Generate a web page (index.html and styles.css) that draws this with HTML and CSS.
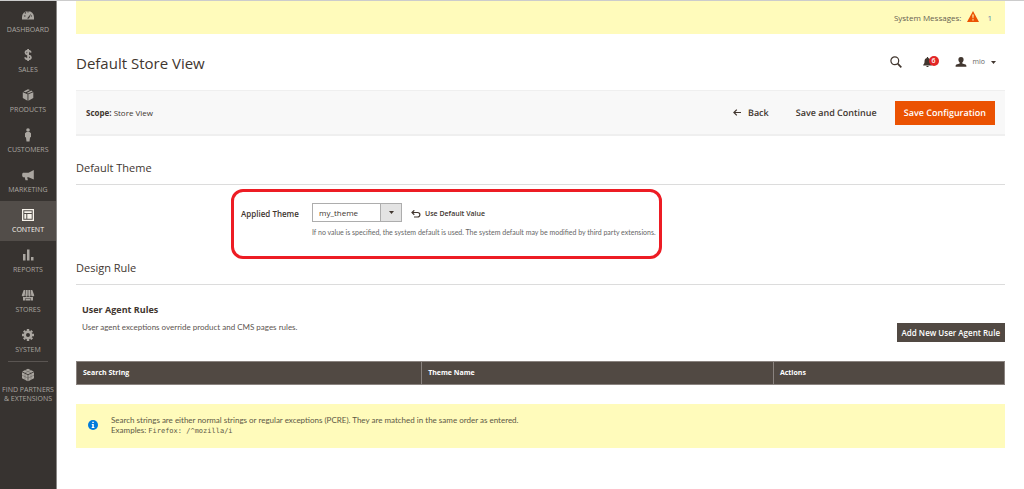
FILE: index.html
```html
<!DOCTYPE html>
<html lang="en">
<head>
<meta charset="utf-8">
<title>Default Store View</title>
<link rel="stylesheet" href="styles.css">
</head>
<body>
<div class="page">
  <nav class="menu" aria-label="Main menu">
    <a class="menu-item" href="#"><svg class="menu-icon" viewBox="0 0 14 14"><path fill="currentColor" fill-rule="evenodd" d="M1 11.500V9a6 6 0 0 1 12 0v2.500zM3 8.500h1.500v-1H3zM4.300 5.800l1-.9-.8-.8-1 .9zM6.500 4.500h1V3h-1zM6 10.500h2l2.200-5zM9.800 8.500H11v-1H10z"/></svg>Dashboard</a>
    <a class="menu-item" href="#"><svg class="menu-icon" viewBox="0 0 14 14"><path fill="none" stroke="currentColor" stroke-width="1.800" d="M9.700 4.700C9.400 2 4.500 2 4.500 4.700S9.900 6.600 9.900 9.300 4.300 12 4.200 9.300M7.100 1v12"/></svg>Sales</a>
    <a class="menu-item" href="#"><svg class="menu-icon" viewBox="0 0 14 14"><path fill="currentColor" d="M7 1.300l2 .8-4.300 2.200-2.200-.9zM10.200 2.600l1.600.8L7 5.600l-1.200-.5zM1.800 4.300l4.700 2v6.400L1.800 10zM12.300 4.300l-4.900 2v6.400l4.900-2.700z"/></svg>Products</a>
    <a class="menu-item" href="#"><svg class="menu-icon" viewBox="0 0 14 14"><circle cx="7" cy="2" r="1.800" fill="currentColor"/><path fill="currentColor" d="M5.500 4h3L10 5.200v4H9V9.800l-.5 3.700h-3L5 9.800v-.6H4v-4z"/></svg>Customers</a>
    <a class="menu-item" href="#"><svg class="menu-icon" viewBox="0 0 14 14"><path fill="currentColor" d="M12.800 2v9.500L7.500 9.200H6.200l.7 3H4.500l-.8-3H2L1.200 8V5.800L2 4.700h5.500z"/></svg>Marketing</a>
    <a class="menu-item menu-item-active" href="#" aria-current="page"><svg class="menu-icon" viewBox="0 0 14 14"><path fill="currentColor" fill-rule="evenodd" d="M1 1h12v12H1zM2.300 2.300v9.400h9.400V2.300zM3.300 3.300h7.400v1.700H3.300zM3.300 6h2v4.700h-2zM6.300 6h4.400v4.700H6.300z"/></svg>Content</a>
    <a class="menu-item" href="#"><svg class="menu-icon" viewBox="0 0 14 14"><path fill="currentColor" d="M2 6h2.500v6.500H2zM6 1.500h2.500v11H6zM10 9h2.500v3.500H10z"/></svg>Reports</a>
    <a class="menu-item" href="#"><svg class="menu-icon" viewBox="0 0 14 14"><path fill="currentColor" d="M2.700 2h1.700L3.700 7.700C3 8.700 1.200 8.500.7 7.500zM5 2h1.700v5.500c-.4 1-2 1-2.400 0zM7.300 2H9l.7 5.500c-.4 1-2 1-2.400 0zM9.600 2h1.700l2 5.500c-.5 1-2.300 1.200-3 .2zM2 9h2.300l1.200-.5L7 9l1.500-.5 1.200.5H12v3.500H9.500V10h-5v2.500H2zM5 10.500h4v2H5z"/></svg>Stores</a>
    <a class="menu-item" href="#"><svg class="menu-icon" viewBox="0 0 14 14"><circle cx="7" cy="7" r="3.200" fill="none" stroke="currentColor" stroke-width="2.400"/><path fill="none" stroke="currentColor" stroke-width="2.400" d="M7 1v2M7 11v2M1 7h2M11 7h2M2.800 2.800l1.400 1.400M9.800 9.800l1.400 1.400M2.800 11.200l1.400-1.400M9.800 4.200l1.400-1.400"/></svg>System</a>
    <a class="menu-item menu-item-last" href="#"><svg class="menu-icon" viewBox="0 0 14 14"><path fill="currentColor" d="M7 .8L12.800 3.500 7 6.200 1.200 3.500zM1 4.200l5.700 2.700v6.300L1 10.300zM13 4.200L7.300 6.900v6.300l5.700-2.900z"/><path stroke="#373330" stroke-width=".3" fill="none" d="M4 2.200l6 2.700M10 2.200L4 4.900M1 7.200l6 2.900 6-2.900M4 5.500v6.300M10 5.500v6.300"/></svg>Find Partners &amp; Extensions</a>
  </nav>

  <main class="content">
    <div class="system-messages">
      <span>System Messages:</span>
      <svg class="warning-icon" viewBox="0 0 12 11"><path fill="#eb5202" d="M6 0l6 11H0z"/><path fill="#fffbbb" d="M5.300 3.500h1.400l-.3 3.800h-.8zM5.400 8.200h1.200v1.300H5.400z"/></svg>
      <a class="message-count" href="#">1</a>
    </div>

    <header class="page-header">
      <h1 class="page-title">Default Store View</h1>
      <button class="icon-button search" type="button" aria-label="Search"><svg width="12" height="12" viewBox="0 0 12 12"><circle cx="4.800" cy="4.800" r="3.900" fill="none" stroke="currentColor" stroke-width="1.200"/><path d="M7.700 7.700l3.600 3.600" stroke="currentColor" stroke-width="1.700"/></svg></button>
      <button class="icon-button bell" type="button" aria-label="Notifications"><svg width="9" height="10" viewBox="0 0 9 10"><path fill="currentColor" d="M3.900 0h1.200v1c1.900.4 2.400 1.900 2.400 3.800 0 1.600.5 2.200 1.300 2.900v.7H.2v-.7c.8-.7 1.300-1.300 1.300-2.900 0-1.900.5-3.400 2.400-3.800zM3.300 8.900h2.400c0 1.300-2.400 1.300-2.400 0z"/></svg><span class="badge">6</span></button>
      <button class="icon-button account" type="button"><svg width="12" height="10" viewBox="0 0 12 10"><path fill="currentColor" d="M6 0c2 0 2.700 1.300 2.600 3-.1 1.200-.7 2-1.300 2.500v1l3.200 1.100c.7.300.9.900.9 2.100H.6c0-1.200.2-1.800.9-2.100l3.200-1.100v-1C4.100 5 3.500 4.200 3.400 3 3.300 1.300 4 0 6 0z"/></svg><span class="account-name">mio</span><svg width="5" height="3" viewBox="0 0 5 3"><path fill="currentColor" d="M0 0h5L2.500 3z"/></svg></button>
    </header>

    <div class="action-bar">
      <p class="scope"><strong>Scope:</strong> Store View</p>
      <button class="button button-plain button-back" type="button"><svg width="8" height="7" viewBox="0 0 8 7"><path d="M8 3.500H1M3.800.6L.9 3.500l2.900 2.900" fill="none" stroke="currentColor" stroke-width="1.200"/></svg>Back</button>
      <button class="button button-plain" type="button">Save and Continue</button>
      <button class="button button-primary" type="button">Save Configuration</button>
    </div>

    <section>
      <h2 class="section-title">Default Theme</h2>
      <div class="field">
        <label class="field-label" for="theme">Applied Theme</label>
        <div class="field-control">
          <div class="field-row">
            <div class="select-wrap">
              <select class="theme-select" id="theme"><option>my_theme</option></select>
              <svg class="select-arrow" width="5" height="3" viewBox="0 0 5 3"><path fill="currentColor" d="M0 0h5L2.500 3z"/></svg>
            </div>
            <button class="use-default" type="button"><svg width="10" height="8" viewBox="0 0 10 8"><path d="M1 2.500h5.500c3.200 0 3.200 4.500 0 4.500H3M3.300.3L1 2.500l2.300 2.200" fill="none" stroke="currentColor" stroke-width="1.200"/></svg>Use Default Value</button>
          </div>
          <p class="field-note">If no value is specified, the system default is used. The system default may be modified by third party extensions.</p>
        </div>
      </div>
    </section>

    <section>
      <h2 class="section-title">Design Rule</h2>
      <div class="rules-head">
        <div>
          <h3 class="rules-title">User Agent Rules</h3>
          <p class="rules-note">User agent exceptions override product and CMS pages rules.</p>
        </div>
        <button class="button-dark" type="button">Add New User Agent Rule</button>
      </div>
      <table class="rules-table">
        <thead><tr><th class="col-search" scope="col">Search String</th><th class="col-theme" scope="col">Theme Name</th><th scope="col">Actions</th></tr></thead>
      </table>
      <div class="notice">
        <svg class="notice-icon" viewBox="0 0 10 10"><circle cx="5" cy="5" r="5" fill="#007bdb"/><path fill="#fff" d="M4.300 1.800h1.500v1.300H4.300zM3.800 4h2v3h.6v.9H3.700V7h.6V4.900h-.5z"/></svg>
        <p>Search strings are either normal strings or regular exceptions (PCRE). They are matched in the same order as entered.<br>Examples: <code>Firefox: /^mozilla/i</code></p>
      </div>
    </section>
  </main>
</div>
</body>
</html>
```
FILE: styles.css
```css
* { box-sizing: border-box; }
body {
  margin: 0;
  background: #fff;
  color: #41362f;
  font-family: "Open Sans", "Noto Sans", sans-serif;
  font-size: 8px;
  line-height: 12px;
}
h1, h2, h3, p { margin: 0; }
button, select { font: inherit; color: inherit; margin: 0; border: 0; padding: 0; background: none; border-radius: 0; }
button { cursor: pointer; white-space: nowrap; }
svg { display: block; flex: none; }

.page { display: flex; min-height: 100vh; border-top: 1px solid #ccc; }

.menu { flex: none; width: 57px; background: #373330; border-right: 1px solid #8a8886; }
.menu-item {
  display: flex;
  flex-direction: column;
  align-items: center;
  gap: 3px;
  height: 40px;
  padding-top: 7px;
  color: #aaa6a0;
  font-size: 7px;
  line-height: 9px;
  text-align: center;
  text-decoration: none;
  text-transform: uppercase;
}
.menu-icon { width: 14px; height: 14px; }
.menu-item-active { background: #524d49; color: #f7f3eb; }
.menu-item-last { height: auto; }
.menu-item-last::before { content: ""; width: 40px; height: 1px; margin: -7px 0 3px; background: #5a5552; }

.content { flex: 1; min-width: 0; padding: 0 19px; }

.system-messages {
  display: flex;
  align-items: center;
  justify-content: flex-end;
  height: 33px;
  padding-right: 13px;
  background: #fffbbb;
  color: #666052;
}
.warning-icon { width: 12px; height: 11px; margin: 0 8px 3px 6px; }
.message-count { color: #5d8ab0; text-decoration: none; }

.page-header { display: flex; align-items: center; height: 56px; padding-right: 9px; }
.page-title { flex: 1; padding-top: 2px; font-size: 15px; font-weight: 400; line-height: 22px; }
.icon-button { display: flex; align-items: center; }
.bell { margin-left: 21px; }
.badge {
  width: 10px;
  height: 10px;
  margin: -2px 0 0 -3px;
  border-radius: 5px;
  background: #e22626;
  color: #fff;
  font-size: 7px;
  font-weight: 600;
  line-height: 10px;
}
.account { margin-left: 16px; gap: 6px; font-size: 7px; }
.account-name { color: #666; }

.action-bar {
  display: flex;
  align-items: center;
  height: 46px;
  padding: 0 10px;
  border-top: 1px solid #efefef;
  border-bottom: 2px solid #efefef;
  background: #f8f8f8;
}
.scope { flex: 1; }
.button { height: 24px; padding: 0 9px; font-size: 9px; font-weight: 600; text-rendering: geometricPrecision; }
.button-plain { margin-right: 9px; }
.button-back { display: flex; align-items: center; gap: 7px; }
.button-primary { background: #eb5202; color: #fff; }

.section-title {
  padding: 8px 0;
  border-bottom: 1px solid #dcdcdc;
  font-size: 11px;
  font-weight: 400;
  line-height: 16px;
}
.action-bar + section { padding-top: 16px; }

.field {
  display: flex;
  gap: 16px;
  width: 431px;
  height: 70px;
  margin: 4px 0 -7px 155px;
  padding: 11px 7px;
  border: 3px solid #ed1c24;
  border-radius: 12px;
}
.field-label { flex: none; width: 55px; line-height: 22px; font-weight: 600; white-space: nowrap; }
.field-row { display: flex; align-items: center; gap: 9px; }
.select-wrap { position: relative; }
.theme-select {
  display: block;
  appearance: none;
  width: 90px;
  height: 19px;
  padding: 0 24px 0 6px;
  border: 1px solid #adadad;
  background: linear-gradient(to left, #e3e3e3 20px, #adadad 20px, #adadad 21px, #fff 21px);
}
.select-arrow { position: absolute; top: 8px; right: 8px; pointer-events: none; }
.use-default { display: flex; align-items: center; gap: 4px; padding-top: 2px; font-size: 7px; font-weight: 600; }
.field-note { margin-top: 4px; color: #666; font-family: Lato, "Open Sans", sans-serif; font-size: 7px; white-space: nowrap; }

.rules-head { display: flex; align-items: flex-start; justify-content: space-between; padding: 18px 0 19px 6px; }
.rules-title { font-size: 9px; font-weight: 700; line-height: 14px; }
.rules-note { margin-top: 4px; color: #5c5550; font-family: Lato, "Open Sans", sans-serif; }
.button-dark { height: 19px; margin-top: 20px; padding: 0 5px; background: #514943; color: #fff; font-weight: 600; }

.rules-table { width: 100%; border-collapse: collapse; table-layout: fixed; }
.rules-table th {
  height: 23px;
  padding: 0 6px;
  border: 1px solid #8a837f;
  background: #514943;
  color: #fff;
  font-size: 7px;
  font-weight: 700;
  text-align: left;
}
.col-search { width: 37.200%; }
.col-theme { width: 37.900%; }

.notice {
  display: flex;
  align-items: center;
  gap: 13px;
  min-height: 44px;
  margin-top: 19px;
  padding: 0 12px 2px;
  background: #fffbbb;
  color: #5c5845;
  font-family: Lato, "Open Sans", sans-serif;
  line-height: 10px;
}
.notice-icon { width: 10px; height: 10px; }
.notice code { font-family: "DejaVu Sans Mono", monospace; font-size: 7px; }
```
